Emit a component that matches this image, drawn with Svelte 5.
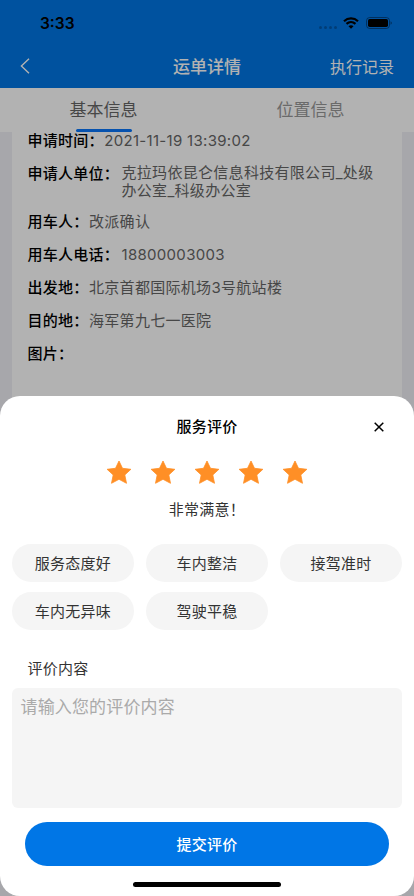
<script>
	const rows = [
		{ label: "申请时间：", value: "2021-11-19 13:39:02" },
		{ label: "申请人单位：", value: "克拉玛依昆仑信息科技有限公司_处级办公室_科级办公室" },
		{ label: "用车人：", value: "改派确认" },
		{ label: "用车人电话：", value: "18800003003" },
		{ label: "出发地：", value: "北京首都国际机场3号航站楼" },
		{ label: "目的地：", value: "海军第九七一医院" },
		{ label: "图片：", value: "" }
	]

	const tags = ["服务态度好", "车内整洁", "接驾准时", "车内无异味", "驾驶平稳"]
	const levels = ["非常不满意！", "不满意！", "一般！", "满意！", "非常满意！"]

	let tab = $state(0)
	let score = $state(5)
	let picked = $state([])
	let open = $state(true)
	let content = $state("")

	function toggle(tag) {
		picked = picked.includes(tag) ? picked.filter(t => t != tag) : [...picked, tag]
	}
</script>

<div class="screen">
	<header>
		<div class="status">
			<span class="time">3:33</span>
			<div class="indicators">
				<span class="dots"><i></i><i></i><i></i><i></i></span>
				<svg class="wifi" viewBox="0 0 16 12">
					<path d="M1 4.2C5 .5 11 .5 15 4.2" />
					<path d="M3.5 6.9C6.1 4.6 9.9 4.6 12.5 6.9" />
					<path class="solid" d="M8 11.8 5.5 9.3C7 8 9 8 10.5 9.3Z" />
				</svg>
				<svg class="battery" viewBox="0 0 26 12">
					<rect class="shell" x=".5" y=".5" width="23" height="11" rx="3.2" />
					<rect x="2" y="2" width="20" height="8" rx="1.7" />
					<path class="cap" d="M24.6 4.2v3.6c1.5-.7 1.5-2.9 0-3.6Z" />
				</svg>
			</div>
		</div>
		<nav>
			<button class="back" aria-label="返回">
				<svg viewBox="0 0 10 16"><path d="M9 .7 1.4 8 9 15.3" /></svg>
			</button>
			<h1>运单详情</h1>
			<button class="record">执行记录</button>
		</nav>
	</header>

	<div class="tabs">
		<button class:active={tab == 0} onclick={() => (tab = 0)}>基本信息</button>
		<button class:active={tab == 1} onclick={() => (tab = 1)}>位置信息</button>
	</div>

	<main>
		<dl>
			{#each rows as row}
				<div class="row" class:wide={row.label.length > 5} class:multi={row.value.length > 20}>
					<dt>{row.label}</dt>
					<dd>{row.value}</dd>
				</div>
			{/each}
		</dl>
	</main>

	{#if open}
		<div class="mask">
			<section class="sheet">
				<div class="sheet_head">
					<h2>服务评价</h2>
					<button class="close" aria-label="关闭" onclick={() => (open = false)}>
						<svg viewBox="0 0 10 10"><path d="M.7.7 9.3 9.3M9.3.7.7 9.3" /></svg>
					</button>
				</div>
				<div class="stars">
					{#each levels as level, i}
						<button class:off={i >= score} aria-label={level} onclick={() => (score = i + 1)}>
							<svg viewBox="0 0 26 25">
								<path d="M13 1 16.5 8.3 24.9 9.3 18.8 14.9 20.5 23.3 13 19.3 5.5 23.3 7.2 14.9 1.1 9.3 9.5 8.3Z" />
							</svg>
						</button>
					{/each}
				</div>
				<p class="level">{levels[score - 1]}</p>
				<div class="tags">
					{#each tags as tag}
						<button class:picked={picked.includes(tag)} onclick={() => toggle(tag)}>{tag}</button>
					{/each}
				</div>
				<h3>评价内容</h3>
				<textarea placeholder="请输入您的评价内容" bind:value={content}></textarea>
				<button class="submit">提交评价</button>
				<div class="home"></div>
			</section>
		</div>
	{/if}
</div>

<style>
	.screen {
		position: relative;
		display: flex;
		flex-direction: column;
		width: 414px;
		height: 896px;
		overflow: hidden;
		background: #fff;
		color: #000;
		font-family: Inter, "Noto Sans CJK SC", sans-serif;
		font-size: 15px;
		letter-spacing: 0.25px;
	}

	button {
		padding: 0;
		border: none;
		background: none;
		color: inherit;
		font: inherit;
		letter-spacing: inherit;
		cursor: pointer;
	}

	h1, h2, h3, p, dl, dd {
		margin: 0;
	}

	svg {
		display: block;
	}

	header {
		background: #0076e4;
		height: 88px;
		flex: none;
	}

	.status {
		display: flex;
		justify-content: space-between;
		align-items: center;
		height: 44px;
		padding: 2px 22px 0 40px;
		box-sizing: border-box;
	}

	.time {
		font-size: 15.5px;
		font-weight: 600;
		letter-spacing: 0;
	}

	.indicators {
		display: flex;
		align-items: center;
	}

	.dots {
		display: flex;
		gap: 2px;
		margin: 8px 6px 0 0;
	}

	.dots i {
		width: 3px;
		height: 3px;
		border-radius: 50%;
		background: rgba(0, 0, 0, 0.25);
	}

	.wifi {
		width: 16px;
		height: 12px;
		margin-right: 7px;
		fill: none;
		stroke: #000;
		stroke-width: 2.2;
	}

	.wifi .solid {
		fill: #000;
		stroke: none;
	}

	.battery {
		width: 26px;
		height: 12px;
	}

	.battery .shell {
		fill: none;
		stroke: rgba(0, 0, 0, 0.4);
	}

	.battery .cap {
		fill: rgba(0, 0, 0, 0.5);
	}

	nav {
		display: grid;
		grid-template-columns: 1fr auto 1fr;
		align-items: center;
		height: 44px;
		padding: 0 20px;
		color: #fff;
	}

	.back svg {
		width: 10px;
		height: 16px;
		fill: none;
		stroke: #fff;
		stroke-width: 1.4;
	}

	h1 {
		padding-bottom: 2px;
		font-size: 17px;
		font-weight: 500;
		letter-spacing: 0;
	}

	.record {
		justify-self: end;
		font-size: 16px;
		letter-spacing: 0;
	}

	.tabs {
		display: flex;
		height: 44px;
		flex: none;
	}

	.tabs button {
		flex: 1;
		display: flex;
		flex-direction: column;
		align-items: center;
		justify-content: space-between;
		padding-top: 8px;
		color: #999;
		font-size: 17px;
		letter-spacing: 0;
	}

	.tabs button::after {
		content: "";
		width: 56px;
		height: 3px;
		border-radius: 2px;
	}

	.tabs .active {
		color: #666;
	}

	.tabs .active::after {
		background: #0a76fa;
	}

	main {
		flex: 1;
		padding: 0 12px;
		background: #f0f0f5;
	}

	dl {
		height: 100%;
		padding: 0 16px 0 15.5px;
		box-sizing: border-box;
		background: #fff;
	}

	.row {
		display: flex;
		margin-bottom: 15px;
		line-height: 18px;
	}

	dt {
		flex: none;
		font-weight: 500;
	}

	dd {
		width: 262px;
		padding-left: 0.5px;
		color: #666;
		letter-spacing: 0.3px;
	}

	.wide dd {
		padding-left: 2.5px;
	}

	.multi dd {
		margin: -1px 0;
		line-height: 17.5px;
	}

	.mask {
		position: absolute;
		inset: 0;
		display: flex;
		align-items: flex-end;
		background: rgba(0, 0, 0, 0.3);
	}

	.sheet {
		display: flex;
		flex-direction: column;
		width: 100%;
		height: 500px;
		padding: 0 12px;
		box-sizing: border-box;
		border-radius: 20px;
		background: #fff;
	}

	.sheet_head {
		display: grid;
		grid-template-columns: 1fr auto 1fr;
		align-items: center;
		height: 60px;
	}

	h2 {
		grid-column: 2;
		padding-bottom: 2px;
		font-size: 15px;
		font-weight: 500;
	}

	.close {
		justify-self: end;
		margin: 2px 18px 0 0;
	}

	.close svg {
		width: 10px;
		height: 10px;
		fill: none;
		stroke: #000;
		stroke-width: 1.5;
	}

	.stars {
		display: flex;
		justify-content: center;
		gap: 18px;
		margin-top: 4px;
	}

	.stars svg {
		width: 26px;
		height: 25px;
		fill: #ff8f26;
		stroke: #ff8f26;
		stroke-width: 0.8;
		stroke-linejoin: round;
	}

	.stars .off svg {
		fill: #ddd;
		stroke: #ddd;
	}

	.level {
		margin-top: 14px;
		line-height: 22px;
		text-align: center;
		color: #333;
	}

	.tags {
		display: grid;
		grid-template-columns: repeat(3, 1fr);
		gap: 10px 12px;
		margin-top: 23px;
	}

	.tags button {
		height: 38px;
		padding-bottom: 2px;
		border-radius: 19px;
		background: #f5f5f5;
		color: #333;
	}

	.tags .picked {
		background: #e0effd;
		color: #0076e6;
	}

	h3 {
		margin: 28px 0 8px 15.5px;
		font-size: 15px;
		font-weight: 400;
		line-height: 22px;
		color: #333;
	}

	textarea {
		height: 120px;
		padding: 5px 8.5px;
		box-sizing: border-box;
		border: none;
		border-radius: 6px;
		outline: none;
		resize: none;
		background: #f5f5f5;
		font: inherit;
		font-size: 17px;
		letter-spacing: 0.15px;
	}

	textarea::placeholder {
		color: #aaa;
	}

	.submit {
		height: 44px;
		margin: 14px 13px 0;
		padding-bottom: 2px;
		border-radius: 22px;
		background: #0076e6;
		color: #fff;
		font-weight: 500;
	}

	.home {
		width: 148px;
		height: 5px;
		margin: 16px auto 0;
		border-radius: 3px;
		background: #000;
	}
</style>
